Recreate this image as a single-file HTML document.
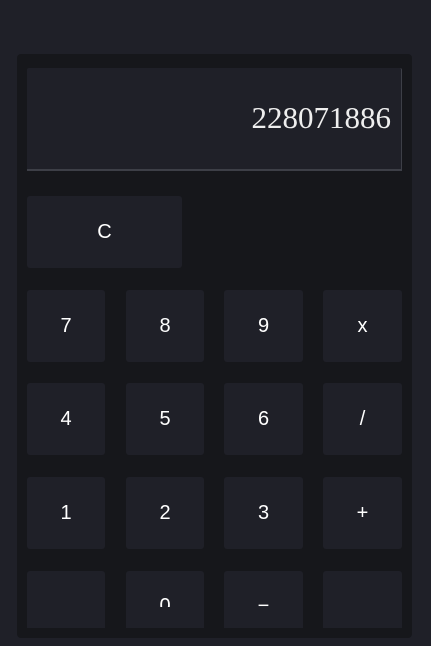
<!DOCTYPE html>
<html><head><style>
html,body{margin:0;padding:0;background:#1f2028;width:431px;height:646px;overflow:hidden}
.panel{position:absolute;left:17px;top:54px;width:395px;height:584px;background:#16171b;border-radius:4px}
.disp{position:absolute;left:27px;top:68px;width:375px;height:103px;background:#1f2028;border-bottom:2px solid #3d3f47;border-right:1px solid #3d3f47;border-radius:2px 2px 0 0;box-sizing:border-box}
.b{position:absolute;background:#1f2028;border-radius:3px;color:#fff;font:20px "Liberation Sans",sans-serif;display:flex;align-items:center;justify-content:center}
.clip{position:absolute;left:0;top:0;width:431px;height:628px;overflow:hidden}
.t{position:absolute;left:0;right:0;top:0;height:36px;overflow:hidden;text-align:center;line-height:70px}
</style></head><body>
<div class="panel"></div>
<div class="disp"></div>
<div style="position:absolute;right:40px;top:99px;font:31px 'Liberation Serif',serif;color:#eee;line-height:38px">228071886</div>
<div class="b" style="left:27px;top:196px;width:155px;height:72px">C</div>
<div class="clip">
<div class="b" style="left:27px;top:290px;width:78px;height:72px">7</div>
<div class="b" style="left:126px;top:290px;width:78px;height:72px">8</div>
<div class="b" style="left:224px;top:290px;width:79px;height:72px">9</div>
<div class="b" style="left:323px;top:290px;width:79px;height:72px">x</div>
<div class="b" style="left:27px;top:383px;width:78px;height:72px">4</div>
<div class="b" style="left:126px;top:383px;width:78px;height:72px">5</div>
<div class="b" style="left:224px;top:383px;width:79px;height:72px">6</div>
<div class="b" style="left:323px;top:383px;width:79px;height:72px">/</div>
<div class="b" style="left:27px;top:477px;width:78px;height:72px">1</div>
<div class="b" style="left:126px;top:477px;width:78px;height:72px">2</div>
<div class="b" style="left:224px;top:477px;width:79px;height:72px">3</div>
<div class="b" style="left:323px;top:477px;width:79px;height:72px">+</div>
<div class="b" style="left:27px;top:571px;width:78px;height:72px"></div>
<div class="b" style="left:126px;top:571px;width:78px;height:72px"><div class="t">0</div></div>
<div class="b" style="left:224px;top:571px;width:79px;height:72px"><div class="t">−</div></div>
<div class="b" style="left:323px;top:571px;width:79px;height:72px"></div>
</div>
</body></html>
